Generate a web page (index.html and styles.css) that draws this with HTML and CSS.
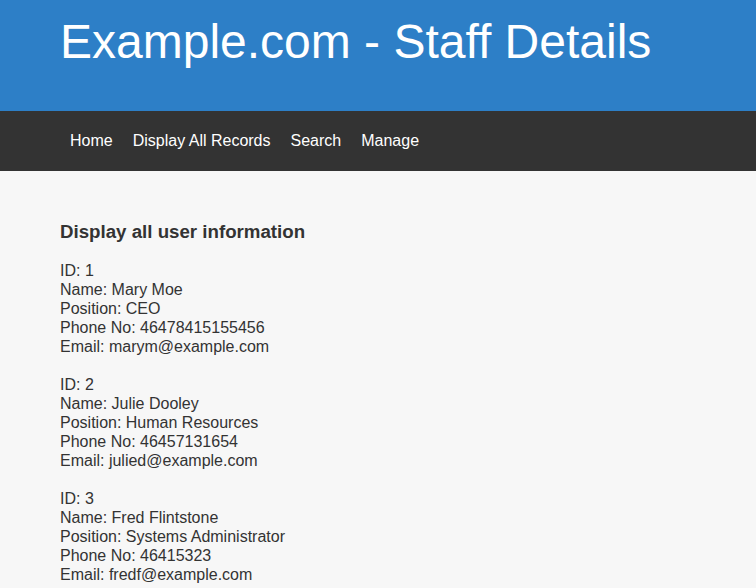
FILE: index.html
```html
<!DOCTYPE html>
<html>
<head>
<meta charset="utf-8">
<title>Example.com - Staff Details</title>
<link rel="stylesheet" href="styles.css">
</head>
<body>
<header class="site-header">
  <h1 class="site-title">Example.com - Staff Details</h1>
</header>
<nav class="site-nav">
  <ul class="nav-list">
    <li><a class="nav-link" href="#">Home</a></li>
    <li><a class="nav-link" href="#">Display All Records</a></li>
    <li><a class="nav-link" href="#">Search</a></li>
    <li><a class="nav-link" href="#">Manage</a></li>
  </ul>
</nav>
<main class="content">
  <h3 class="section-title">Display all user information</h3>
  <div class="record">ID: 1<br>Name: Mary Moe<br>Position: CEO<br>Phone No: 46478415155456<br>Email: marym@example.com</div>
  <div class="record">ID: 2<br>Name: Julie Dooley<br>Position: Human Resources<br>Phone No: 46457131654<br>Email: julied@example.com</div>
  <div class="record">ID: 3<br>Name: Fred Flintstone<br>Position: Systems Administrator<br>Phone No: 46415323<br>Email: fredf@example.com</div>
</main>
</body>
</html>
```
FILE: styles.css
```css
html, body {
  margin: 0;
  padding: 0;
}
body {
  font-family: "Liberation Sans", Arial, sans-serif;
  background: #f7f7f7;
  color: #333333;
}
.site-header {
  background: #2d7fc7;
  height: 111px;
  box-sizing: border-box;
  padding: 0 60px;
}
.site-title {
  margin: 0;
  padding-top: 14px;
  font-size: 48px;
  font-weight: normal;
  line-height: 56px;
  color: #ffffff;
}
.site-nav {
  background: #333333;
  height: 60px;
  padding: 0 60px;
  display: flex;
  align-items: center;
}
.nav-list {
  list-style: none;
  margin: 0;
  padding: 0;
  display: flex;
}
.nav-link {
  display: block;
  padding: 0 10px;
  color: #ffffff;
  text-decoration: none;
  font-size: 16px;
  line-height: 20px;
}
.content {
  padding: 40px 60px 0;
}
.section-title {
  margin: 10px 0 18px;
  font-size: 18.7px;
  font-weight: bold;
  line-height: 22px;
}
.record {
  font-size: 16px;
  line-height: 19px;
  margin-bottom: 19px;
}
```
